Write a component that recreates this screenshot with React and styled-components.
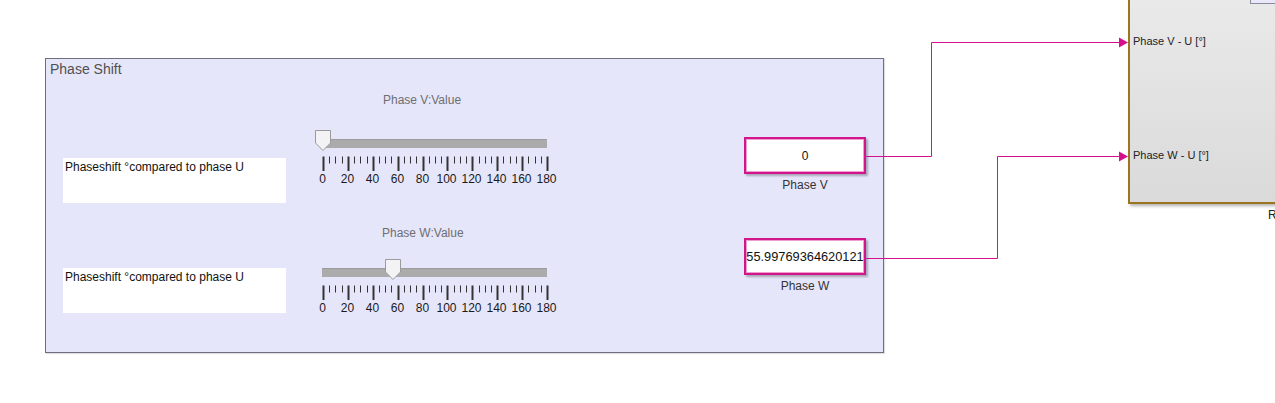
import React from "react";
import styled, { createGlobalStyle } from "styled-components";

const Global = createGlobalStyle`
  html, body { margin: 0; padding: 0; background: #ffffff; }
  body { font-family: "Liberation Sans", Arial, sans-serif; }
`;

const WIRE = "#d4108c";

const Canvas = styled.div`
  position: relative;
  width: 1275px;
  height: 403px;
  overflow: hidden;
  background: #ffffff;
`;

const Node = styled.div`
  position: absolute;
  left: ${(p) => p.$x}px;
  top: ${(p) => p.$y}px;
`;

const Area = styled(Node)`
  width: ${(p) => p.$w}px;
  height: ${(p) => p.$h}px;
  box-sizing: border-box;
  background: #e6e6fb;
  border: 1px solid #6e6e80;
  box-shadow: 1px 1px 1px rgba(0, 0, 0, 0.12);
  display: flex;
  flex-direction: column;
`;

const AreaTitle = styled.div`
  height: 18px;
  padding: 2px 0 0 4px;
  box-sizing: border-box;
  font-size: 14px;
  line-height: 16px;
  color: #505050;
`;

const Columns = styled.div`
  display: flex;
  padding-left: 17px;
`;

const Column = styled.div`
  display: flex;
  flex-direction: column;
  width: ${(p) => p.$w}px;
  margin-left: ${(p) => p.$left || 0}px;
  padding-top: ${(p) => p.$top}px;
  gap: ${(p) => p.$gap}px;
`;

const NoteBox = styled.div`
  width: 223px;
  height: 45px;
  box-sizing: border-box;
  background: #ffffff;
  padding: 2px 0 0 2px;
  font-size: 12px;
  line-height: 14px;
  color: #111;
`;

const SliderBlock = styled.div`
  width: 260px;
  display: flex;
  flex-direction: column;
`;

const SliderLabel = styled.div`
  height: 14px;
  padding-left: ${(p) => p.$indent}px;
  font-size: 12px;
  line-height: 14px;
  color: #6e6e6e;
`;

const TrackRow = styled.div`
  position: relative;
  height: 20px;
  margin-top: ${(p) => p.$gap}px;
`;

const Track = styled.div`
  position: absolute;
  left: 22px;
  top: 9px;
  width: 225px;
  height: 9px;
  background: #ababab;
  border-top: 1px solid #9c9c9c;
  box-sizing: border-box;
`;

const Thumb = styled.svg`
  position: absolute;
  top: 0;
  display: block;
`;

const Scale = styled.svg`
  display: block;
  margin-top: 6px;
`;

const DisplayBlock = styled.div`
  width: 122px;
  display: flex;
  flex-direction: column;
  align-items: center;
`;

const DisplayBox = styled.div`
  width: 122px;
  height: 37px;
  box-sizing: border-box;
  background: #ffffff;
  border: 2px solid #d0168a;
  box-shadow: inset 0 0 0 1px #ee9fd0, 2px 2px 2px rgba(0, 0, 0, 0.28);
  display: flex;
  align-items: center;
  justify-content: center;
  font-size: ${(p) => p.$size}px;
  color: #111;
  white-space: nowrap;
`;

const Caption = styled.div`
  margin-top: 4px;
  font-size: 12px;
  line-height: 14px;
  color: #333;
  white-space: nowrap;
`;

const Subsystem = styled(Node)`
  width: 200px;
  height: 216px;
  box-sizing: border-box;
  border: 2px solid #9b7520;
  background: linear-gradient(#eaeaea, #dadada);
  box-shadow: 2px 2px 3px rgba(0, 0, 0, 0.3);
`;

const PortLabel = styled(Node)`
  font-size: 11px;
  line-height: 13px;
  color: #222;
  white-space: nowrap;
`;

const MaskTag = styled(Node)`
  width: 40px;
  height: 14px;
  box-sizing: border-box;
  background: #e8e8fa;
  border: 1px solid #8a8a9a;
`;

const BlockName = styled(Node)`
  font-size: 12px;
  line-height: 14px;
  color: #222;
  white-space: nowrap;
`;

const Wires = styled.svg`
  position: absolute;
  left: 0;
  top: 0;
  pointer-events: none;
`;

const TICK0 = 23;
const SPAN = 224;

function Slider({ label, indent, gap, value }) {
  const thumbLeft = TICK0 - 8 + (value / 180) * SPAN;
  const majors = Array.from({ length: 10 }, (_, i) => i);
  const minors = Array.from({ length: 37 }, (_, i) => i).filter((j) => j % 4 !== 0);
  return (
    <SliderBlock>
      <SliderLabel $indent={indent}>{label}</SliderLabel>
      <TrackRow $gap={gap}>
        <Track />
        <Thumb width="17" height="21" viewBox="0 0 17 21" style={{ left: thumbLeft }}>
          <polygon
            points="0.5,0.5 15.5,0.5 15.5,13 8,20.5 0.5,13"
            fill="#f3f3f6"
            stroke="#9a9a9a"
            strokeWidth="1"
          />
        </Thumb>
      </TrackRow>
      <Scale width="260" height="32" viewBox="0 0 260 32">
        {minors.map((j) => {
          const tx = Math.round(TICK0 + (j * SPAN) / 36) + 0.5;
          return <line key={j} x1={tx} x2={tx} y1="0.5" y2="7.5" stroke="#333" strokeWidth="1" />;
        })}
        {majors.map((i) => {
          const tx = Math.round(TICK0 + (i * SPAN) / 9) + 0.5;
          return (
            <g key={i}>
              <line x1={tx} x2={tx} y1="0.5" y2="15" stroke="#333" strokeWidth="2" />
              <text
                x={tx - 1}
                y="27"
                textAnchor="middle"
                fontFamily="'Liberation Sans', Arial, sans-serif"
                fontSize="12"
                fill="#1a1a1a"
              >
                {i * 20}
              </text>
            </g>
          );
        })}
      </Scale>
    </SliderBlock>
  );
}

function Display({ value, caption, size = 12 }) {
  return (
    <DisplayBlock>
      <DisplayBox $size={size}>{value}</DisplayBox>
      <Caption>{caption}</Caption>
    </DisplayBlock>
  );
}

export default function App() {
  return (
    <>
      <Global />
      <Canvas>
        <Area $x={45} $y={58} $w={839} $h={295}>
          <AreaTitle>Phase Shift</AreaTitle>
          <Columns>
            <Column $w={223} $top={81} $gap={65}>
              <NoteBox>Phaseshift °compared to phase U</NoteBox>
              <NoteBox>Phaseshift °compared to phase U</NoteBox>
            </Column>
            <Column $w={260} $left={14} $top={16} $gap={38}>
              <Slider label="Phase V:Value" indent={83} gap={23} value={0} />
              <Slider label="Phase W:Value" indent={82} gap={19} value={55.99769364620121} />
            </Column>
            <Column $w={122} $left={184} $top={60} $gap={46}>
              <Display value="0" caption="Phase V" />
              <Display value="55.99769364620121" caption="Phase W" size={12.8} />
            </Column>
          </Columns>
        </Area>

        <Subsystem $x={1128} $y={-12}>
          <MaskTag $x={120} $y={0} />
          <PortLabel $x={3} $y={45}>Phase V - U [°]</PortLabel>
          <PortLabel $x={3} $y={159}>Phase W - U [°]</PortLabel>
        </Subsystem>
        <BlockName $x={1268} $y={208}>R</BlockName>

        <Wires width="1275" height="403" viewBox="0 0 1275 403">
          <path d="M866 156.5 H931.5 V42.5 H1121" fill="none" stroke={WIRE} strokeWidth="1" />
          <path d="M866 258.5 H997.5 V156.5 H1121" fill="none" stroke={WIRE} strokeWidth="1" />
          <polygon points="1119,37.5 1128,42.5 1119,47.5" fill={WIRE} />
          <polygon points="1119,151.5 1128,156.5 1119,161.5" fill={WIRE} />
        </Wires>
      </Canvas>
    </>
  );
}
